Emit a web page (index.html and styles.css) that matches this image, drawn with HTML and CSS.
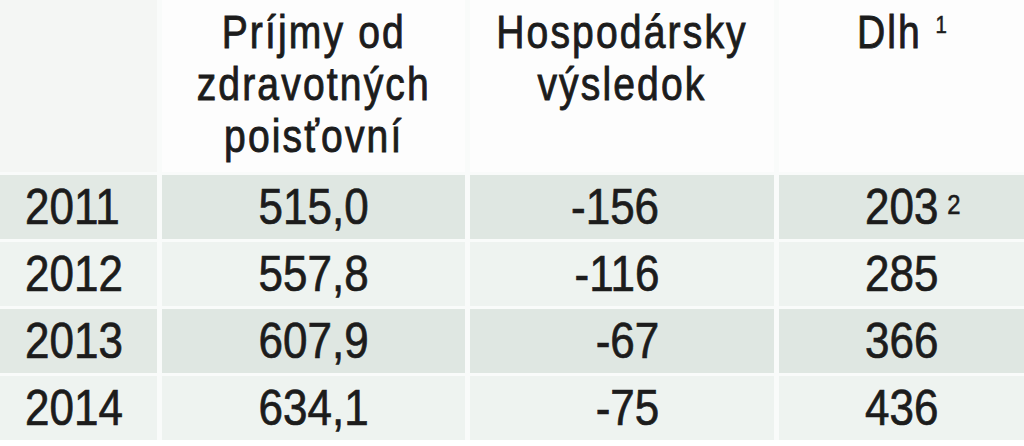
FILE: index.html
```html
<!DOCTYPE html>
<html lang="sk">
<head>
<meta charset="utf-8">
<title>Tabuľka</title>
<link rel="stylesheet" href="styles.css">
</head>
<body>
<div class="table">
  <div class="cell head first"></div>
  <div class="cell head c2"><span class="txt">Príjmy od<br>zdravotných<br>poisťovní</span></div>
  <div class="cell head c3"><span class="txt">Hospodársky<br>výsledok</span></div>
  <div class="cell head c4"><span class="txt">Dlh<span class="sup-h">1</span></span></div>

  <div class="cell odd year"><span class="txt">2011</span></div>
  <div class="cell odd c2"><span class="txt">515,0</span></div>
  <div class="cell odd c3"><span class="txt">-156</span></div>
  <div class="cell odd c4"><span class="txt">203<span class="sup-d">2</span></span></div>

  <div class="cell even year"><span class="txt">2012</span></div>
  <div class="cell even c2"><span class="txt">557,8</span></div>
  <div class="cell even c3"><span class="txt">-116</span></div>
  <div class="cell even c4"><span class="txt">285</span></div>

  <div class="cell odd year"><span class="txt">2013</span></div>
  <div class="cell odd c2"><span class="txt">607,9</span></div>
  <div class="cell odd c3"><span class="txt">-67</span></div>
  <div class="cell odd c4"><span class="txt">366</span></div>

  <div class="cell even year"><span class="txt">2014</span></div>
  <div class="cell even c2"><span class="txt">634,1</span></div>
  <div class="cell even c3"><span class="txt">-75</span></div>
  <div class="cell even c4"><span class="txt">436</span></div>
</div>
</body>
</html>
```

FILE: styles.css
```css
html, body {
  margin: 0;
  padding: 0;
  background: #ffffff;
}

body {
  width: 1024px;
  height: 446px;
  overflow: hidden;
  font-family: "Liberation Sans", Arial, sans-serif;
  color: #1c1c1c;
}

.table {
  display: grid;
  grid-template-columns: 157px 303px 304px 245px;
  grid-template-rows: 172px 64px 64px 64px 64px;
  column-gap: 5px;
  row-gap: 3px;
  background: #f9fbfa;
}

.cell {
  font-size: 50px;
  line-height: 64px;
  white-space: nowrap;
  -webkit-text-stroke: 0.7px #1c1c1c;
}

/* condensed look: Liberation Sans squeezed to a condensed grotesque */
.txt {
  display: inline-block;
  transform: scaleX(0.88);
  transform-origin: left center;
}

.c2 .txt {
  transform-origin: center center;
}

.c3 .txt {
  transform-origin: right center;
}

.head {
  background: #fdfdfd;
  font-size: 46px;
  line-height: 52px;
  padding-top: 6px;
  text-align: center;
  -webkit-text-stroke: 0.9px #1c1c1c;
}

.head.cell .txt {
  transform: scaleX(0.85);
  transform-origin: center top;
  letter-spacing: 2.5px;
}

.head.first {
  background: #f4f6f4;
}

.odd {
  background: #dfe7e2;
}

.even {
  background: #eef3f0;
}

.year {
  padding-left: 25px;
}

.odd.year {
  background: #e2e9e4;
}

.c2 {
  text-align: center;
}

.c3 {
  text-align: right;
  padding-right: 115px;
}

.head.c3 {
  text-align: center;
  padding-right: 0;
}

.c4 {
  padding-left: 86px;
}

.head.c4 {
  text-align: center;
  padding-left: 0;
}

.sup-h {
  font-size: 24px;
  line-height: 1;
  letter-spacing: 0;
  vertical-align: 15px;
  margin-left: 16px;
  -webkit-text-stroke: 0.6px #1c1c1c;
}

.sup-d {
  font-size: 27px;
  line-height: 1;
  vertical-align: 10px;
  margin-left: 10px;
  -webkit-text-stroke: 0.6px #1c1c1c;
}
```
